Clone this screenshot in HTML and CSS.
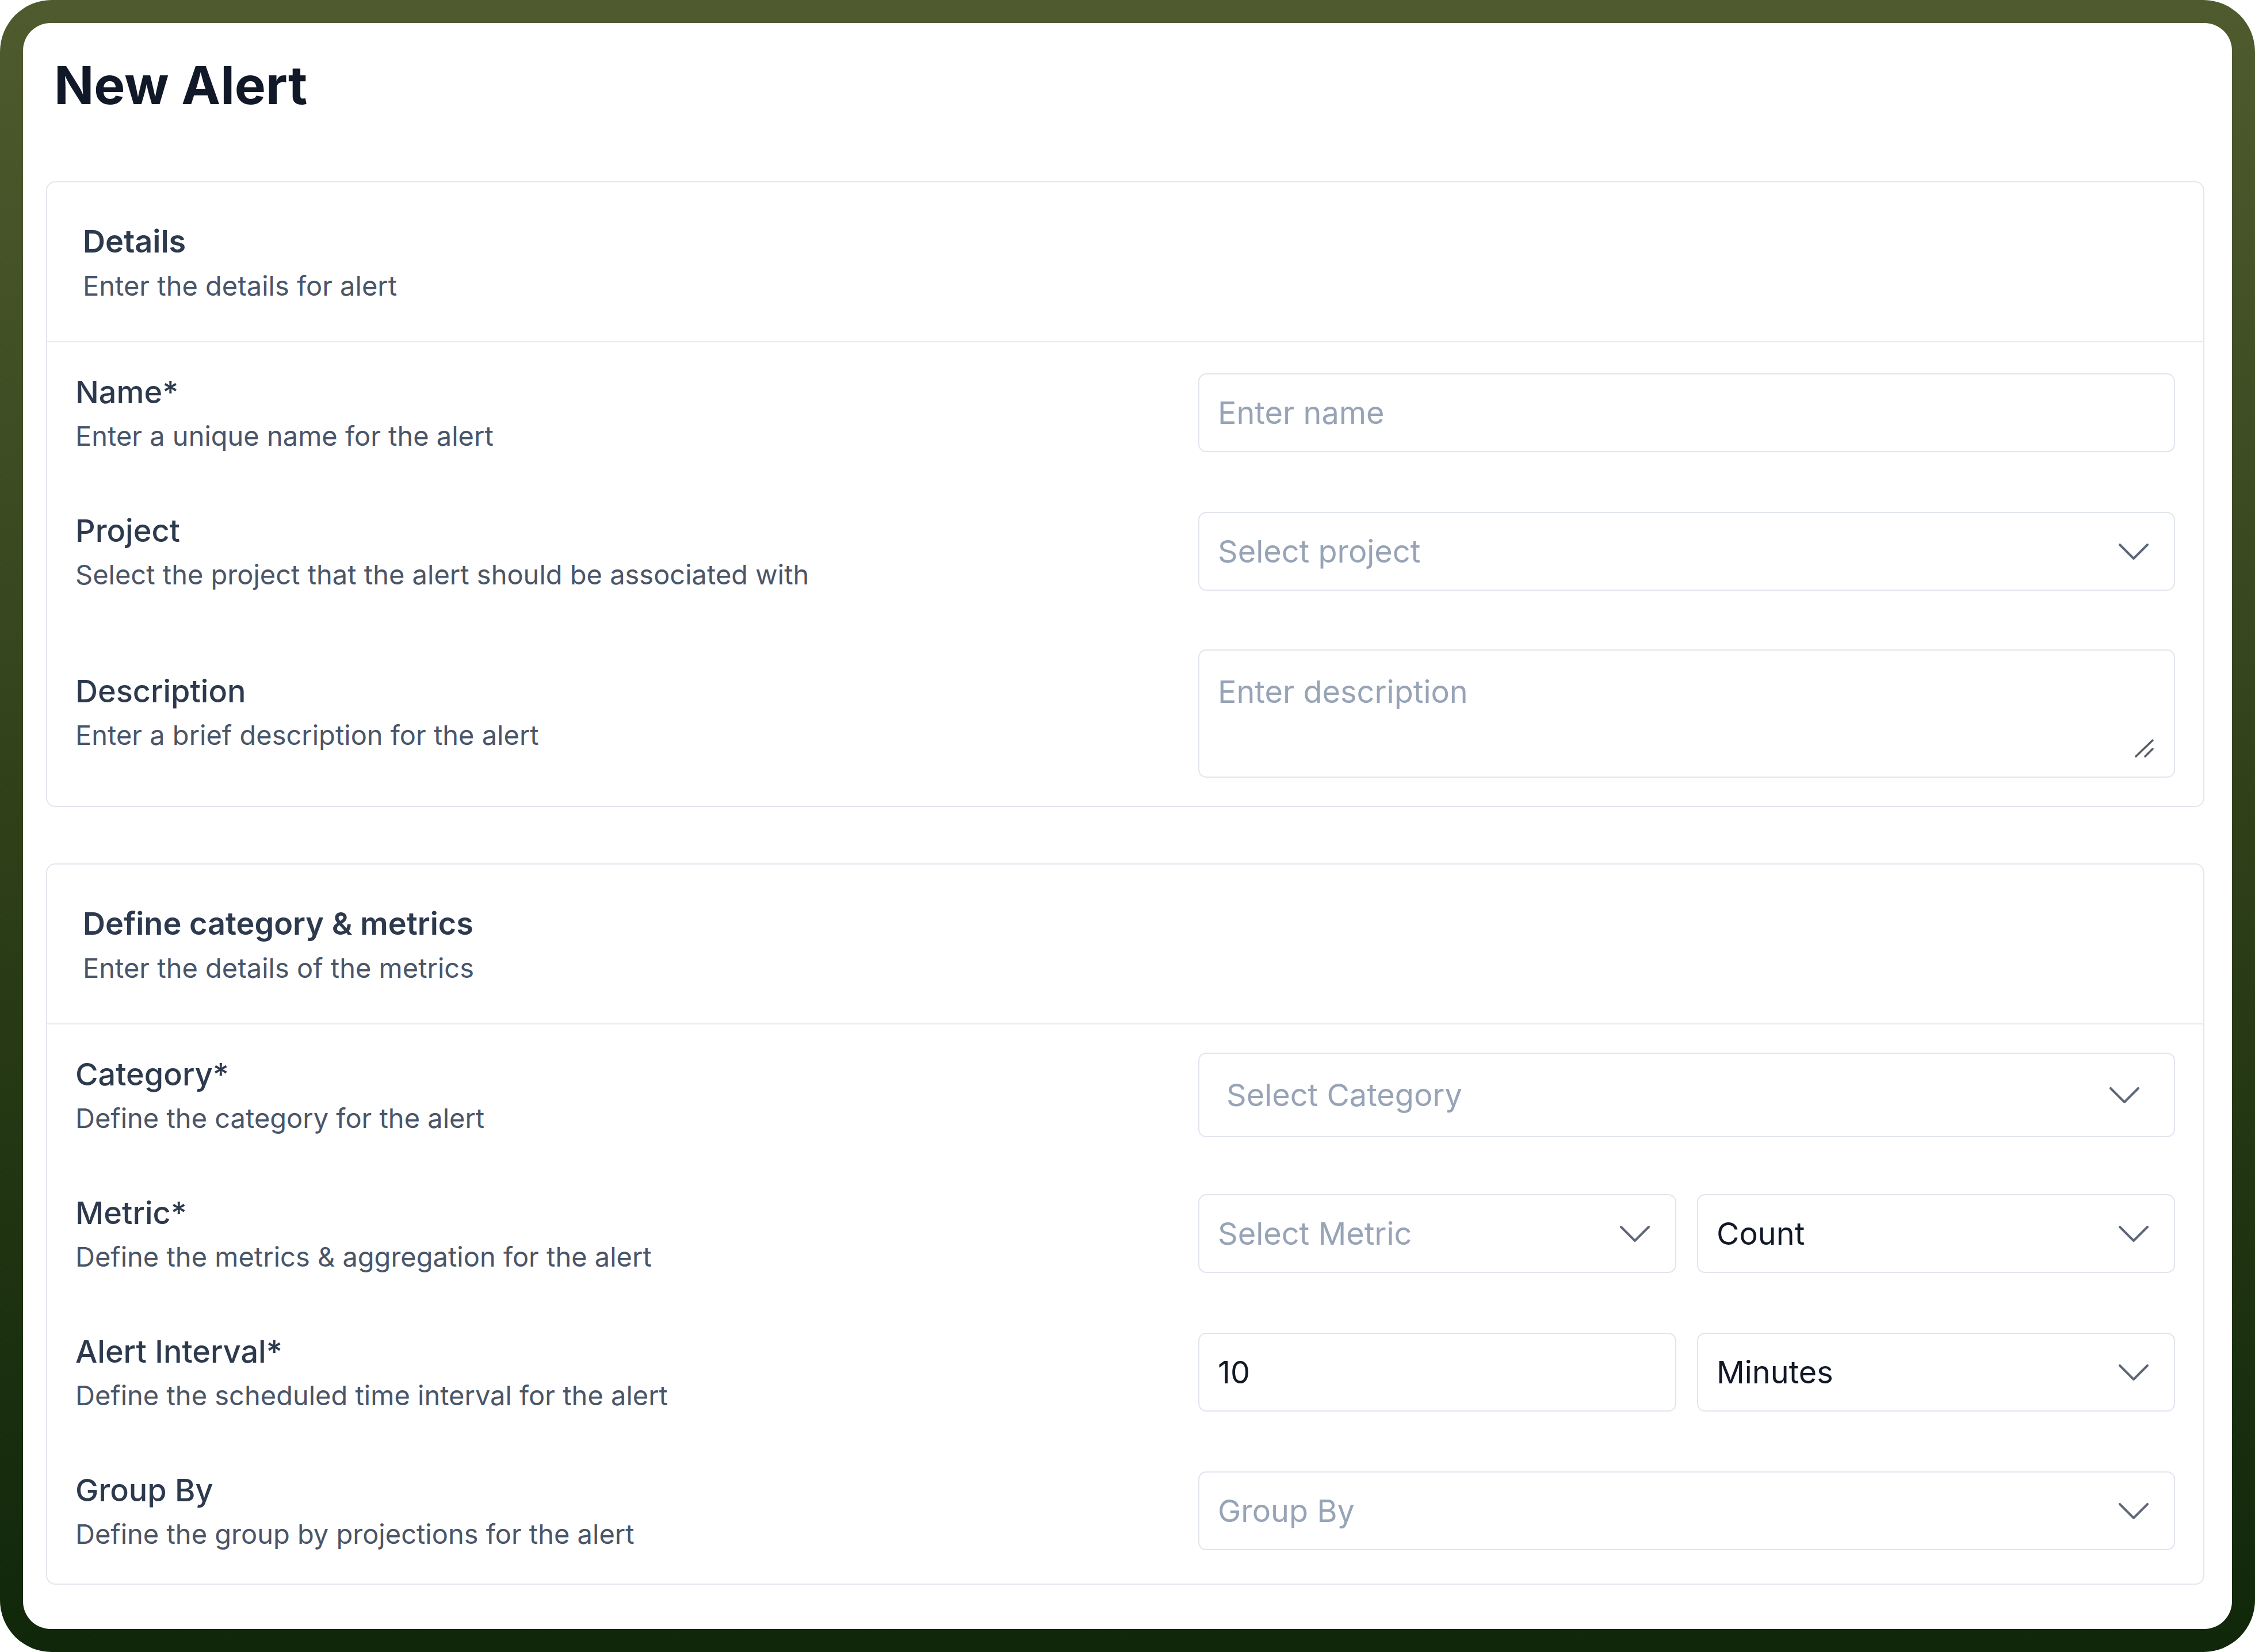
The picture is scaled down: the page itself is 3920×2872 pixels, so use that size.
FILE: index.html
```html
<!DOCTYPE html>
<html lang="en">
<head>
    <meta charset="UTF-8">
    <title>New Alert</title>
    <link rel="stylesheet" href="styles.css">
</head>
<body>
    <div class="frame">
        <div class="panel">
            <h1 class="page-title">New Alert</h1>

            <!-- 基本信息 -->
            <section class="card">
                <div class="card-head">
                    <h2 class="card-title">Details</h2>
                    <p class="card-desc">Enter the details for alert</p>
                </div>
                <div class="card-body">
                    <div class="field-row">
                        <div class="field-info">
                            <div class="field-label">Name*</div>
                            <div class="field-desc">Enter a unique name for the alert</div>
                        </div>
                        <input type="text" class="text-input" placeholder="Enter name">
                    </div>

                    <div class="field-row">
                        <div class="field-info">
                            <div class="field-label">Project</div>
                            <div class="field-desc">Select the project that the alert should be associated with</div>
                        </div>
                        <div class="select">
                            <span class="placeholder">Select project</span>
                            <svg class="chevron" width="52" height="28" viewBox="0 0 52 28"><path d="M2 2 L26 26 L50 2" /></svg>
                        </div>
                    </div>

                    <div class="field-row">
                        <div class="field-info">
                            <div class="field-label">Description</div>
                            <div class="field-desc">Enter a brief description for the alert</div>
                        </div>
                        <div class="textarea-wrap">
                            <textarea class="text-area" placeholder="Enter description"></textarea>
                            <svg class="resize-grip" width="34" height="32" viewBox="0 0 34 32"><path d="M2 30 L31 2 M18 30 L31 17" /></svg>
                        </div>
                    </div>
                </div>
            </section>

            <!-- 分类与指标 -->
            <section class="card">
                <div class="card-head">
                    <h2 class="card-title">Define category &amp; metrics</h2>
                    <p class="card-desc">Enter the details of the metrics</p>
                </div>
                <div class="card-body">
                    <div class="field-row">
                        <div class="field-info">
                            <div class="field-label">Category*</div>
                            <div class="field-desc">Define the category for the alert</div>
                        </div>
                        <div class="select select-lg">
                            <span class="placeholder">Select Category</span>
                            <svg class="chevron" width="52" height="28" viewBox="0 0 52 28"><path d="M2 2 L26 26 L50 2" /></svg>
                        </div>
                    </div>

                    <div class="field-row">
                        <div class="field-info">
                            <div class="field-label">Metric*</div>
                            <div class="field-desc">Define the metrics &amp; aggregation for the alert</div>
                        </div>
                        <div class="split">
                            <div class="select">
                                <span class="placeholder">Select Metric</span>
                                <svg class="chevron" width="52" height="28" viewBox="0 0 52 28"><path d="M2 2 L26 26 L50 2" /></svg>
                            </div>
                            <div class="select">
                                <span class="value">Count</span>
                                <svg class="chevron" width="52" height="28" viewBox="0 0 52 28"><path d="M2 2 L26 26 L50 2" /></svg>
                            </div>
                        </div>
                    </div>

                    <div class="field-row">
                        <div class="field-info">
                            <div class="field-label">Alert Interval*</div>
                            <div class="field-desc">Define the scheduled time interval for the alert</div>
                        </div>
                        <div class="split">
                            <input type="text" class="text-input" value="10">
                            <div class="select">
                                <span class="value">Minutes</span>
                                <svg class="chevron" width="52" height="28" viewBox="0 0 52 28"><path d="M2 2 L26 26 L50 2" /></svg>
                            </div>
                        </div>
                    </div>

                    <div class="field-row">
                        <div class="field-info">
                            <div class="field-label">Group By</div>
                            <div class="field-desc">Define the group by projections for the alert</div>
                        </div>
                        <div class="select">
                            <span class="placeholder">Group By</span>
                            <svg class="chevron" width="52" height="28" viewBox="0 0 52 28"><path d="M2 2 L26 26 L50 2" /></svg>
                        </div>
                    </div>
                </div>
            </section>
        </div>
    </div>
</body>
</html>
```

FILE: styles.css
```css
html, body {
    margin: 0;
    padding: 0;
    background: #ffffff;
    font-family: Inter, "Noto Sans", sans-serif;
    color: #334155;
}

.frame {
    height: 100vh;
    box-sizing: border-box;
    padding: 40px;
    border-radius: 90px;
    background: linear-gradient(180deg, #4f5b2e 0%, #2f4019 50%, #10270a 100%);
}

.panel {
    height: 100%;
    box-sizing: border-box;
    padding: 40px 48px 40px 40px;
    background: #ffffff;
    border-radius: 48px;
}

.page-title {
    margin: 22px 0 121px 14px;
    font-size: 91px;
    line-height: 92px;
    font-weight: 700;
    color: #111827;
}

.card {
    border: 2px solid #e3e6ee;
    border-radius: 16px;
}

.card + .card {
    margin-top: 98px;
}

.card-head {
    padding: 68px 62px 59px;
    border-bottom: 2px solid #e8ebf1;
}

.card-title {
    margin: 0;
    font-size: 54px;
    line-height: 70px;
    font-weight: 600;
    color: #2d3a4e;
}

.card-desc {
    margin: 4px 0 0;
    font-size: 47px;
    line-height: 75px;
    color: #4a5568;
}

.card-body {
    display: flex;
    flex-direction: column;
    gap: 93px;
    padding: 52px 49px 49px;
}

.field-row {
    display: grid;
    grid-template-columns: 1fr 1fr;
    column-gap: 254px;
    align-items: start;
}

.field-info {
    align-self: center;
}

.field-label {
    font-size: 54px;
    line-height: 70px;
    font-weight: 500;
    color: #2d3a4e;
}

.field-desc {
    margin-top: 3px;
    font-size: 47px;
    line-height: 75px;
    color: #4a5568;
}

.text-input,
.select,
.text-area {
    box-sizing: border-box;
    width: 100%;
    border: 2px solid #e1e5ed;
    border-radius: 14px;
    background: #ffffff;
    font-family: inherit;
    font-size: 54px;
    color: #111827;
}

.field-row > .text-input,
.field-row > .select,
.split {
    margin-top: 2px;
}

.field-row > .select-lg {
    margin-top: -3px;
}

.text-input {
    height: 137px;
    padding: 0 32px;
    outline: none;
}

.text-input::placeholder,
.text-area::placeholder,
.placeholder {
    color: #97a3b6;
}

.select {
    display: flex;
    align-items: center;
    justify-content: space-between;
    height: 137px;
    padding: 0 44px 0 32px;
}

.select-lg {
    height: 147px;
    padding: 0 60px 0 47px;
}

.chevron {
    flex-shrink: 0;
    fill: none;
    stroke: #5d6778;
    stroke-width: 4;
    stroke-linecap: round;
    stroke-linejoin: round;
}

.split {
    display: grid;
    grid-template-columns: 1fr 1fr;
    gap: 36px;
}

.textarea-wrap {
    position: relative;
}

.text-area {
    display: block;
    height: 223px;
    padding: 37px 32px;
    line-height: 70px;
    resize: none;
    outline: none;
}

.resize-grip {
    position: absolute;
    right: 36px;
    bottom: 35px;
    fill: none;
    stroke: #555b66;
    stroke-width: 3.5;
    stroke-linecap: round;
}
```
